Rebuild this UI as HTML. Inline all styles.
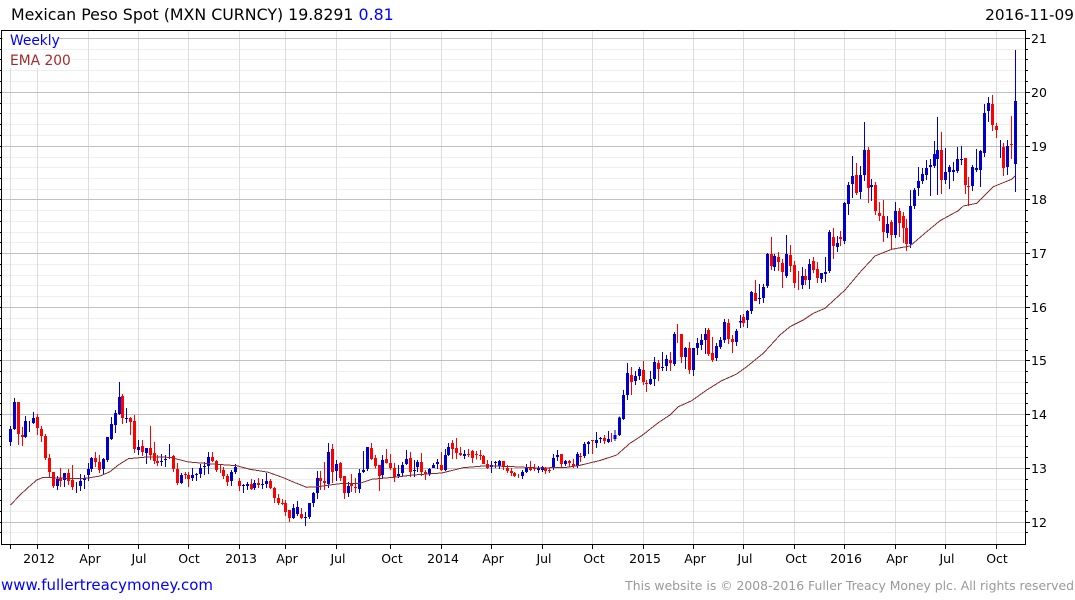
<!DOCTYPE html>
<html><head><meta charset="utf-8"><title>Mexican Peso Spot</title>
<style>
html,body{margin:0;padding:0;background:#fff;width:1075px;height:600px;overflow:hidden}
svg{display:block}
text{font-family:"DejaVu Sans",sans-serif}
.a{font-size:12.5px;fill:#000;text-anchor:middle}
.y{font-size:12.5px;fill:#000}
</style></head><body>
<svg width="1075" height="600" viewBox="0 0 1075 600" xmlns="http://www.w3.org/2000/svg">
<rect width="1075" height="600" fill="#fff"/>
<g shape-rendering="crispEdges" fill="none">
<path stroke="#eeeeee" d="M1 49.5H1025M1 59.5H1025M1 70.5H1025M1 81.5H1025M1 103.5H1025M1 113.5H1025M1 124.5H1025M1 135.5H1025M1 157.5H1025M1 167.5H1025M1 178.5H1025M1 189.5H1025M1 210.5H1025M1 221.5H1025M1 232.5H1025M1 242.5H1025M1 264.5H1025M1 275.5H1025M1 285.5H1025M1 296.5H1025M1 318.5H1025M1 328.5H1025M1 339.5H1025M1 350.5H1025M1 371.5H1025M1 382.5H1025M1 393.5H1025M1 403.5H1025M1 425.5H1025M1 436.5H1025M1 446.5H1025M1 457.5H1025M1 479.5H1025M1 489.5H1025M1 500.5H1025M1 511.5H1025M1 532.5H1025"/>
<path stroke="#dddddd" d="M10.5 68V544M37.5 68V544M88.5 31V544M138.5 31V544M188.5 31V544M239.5 31V544M285.5 31V544M336.5 31V544M390.5 31V544M441.5 31V544M491.5 31V544M542.5 31V544M592.5 31V544M643.5 31V544M693.5 31V544M743.5 31V544M794.5 31V544M844.5 31V544M895.5 31V544M945.5 31V544M996.5 31V544"/>
<path stroke="#c0c0c0" d="M1 38.5H1025M1 92.5H1025M1 146.5H1025M1 199.5H1025M1 253.5H1025M1 307.5H1025M1 360.5H1025M1 414.5H1025M1 468.5H1025M1 522.5H1025"/>
<rect x="3" y="32" width="56" height="15" fill="#fff"/>
<rect x="3" y="52" width="68" height="16" fill="#fff"/>
<path stroke="#000" d="M1.5 30.5H1025.5M1.5 30V544.5M1 544.5H1025.5M1025.5 30V545"/>
<path stroke="#000" d="M10.5 545V549M37.5 545V549M88.5 545V549M138.5 545V549M188.5 545V549M239.5 545V549M285.5 545V549M336.5 545V549M390.5 545V549M441.5 545V549M491.5 545V549M542.5 545V549M592.5 545V549M643.5 545V549M693.5 545V549M743.5 545V549M794.5 545V549M844.5 545V549M895.5 545V549M945.5 545V549M996.5 545V549"/>
<path stroke="#000" d="M1026 38.5H1030M1026 92.5H1030M1026 146.5H1030M1026 199.5H1030M1026 253.5H1030M1026 307.5H1030M1026 360.5H1030M1026 414.5H1030M1026 468.5H1030M1026 522.5H1030M1026 49.5H1028M1026 59.5H1028M1026 70.5H1028M1026 81.5H1028M1026 103.5H1028M1026 113.5H1028M1026 124.5H1028M1026 135.5H1028M1026 157.5H1028M1026 167.5H1028M1026 178.5H1028M1026 189.5H1028M1026 210.5H1028M1026 221.5H1028M1026 232.5H1028M1026 242.5H1028M1026 264.5H1028M1026 275.5H1028M1026 285.5H1028M1026 296.5H1028M1026 318.5H1028M1026 328.5H1028M1026 339.5H1028M1026 350.5H1028M1026 371.5H1028M1026 382.5H1028M1026 393.5H1028M1026 403.5H1028M1026 425.5H1028M1026 436.5H1028M1026 446.5H1028M1026 457.5H1028M1026 479.5H1028M1026 489.5H1028M1026 500.5H1028M1026 511.5H1028M1026 532.5H1028"/>
<path stroke="#000" d="M0 38.5H1M0 49.5H1M0 59.5H1M0 70.5H1M0 81.5H1M0 92.5H1M0 103.5H1M0 113.5H1M0 124.5H1M0 135.5H1M0 146.5H1M0 157.5H1M0 167.5H1M0 178.5H1M0 189.5H1M0 199.5H1M0 210.5H1M0 221.5H1M0 232.5H1M0 242.5H1M0 253.5H1M0 264.5H1M0 275.5H1M0 285.5H1M0 296.5H1M0 307.5H1M0 318.5H1M0 328.5H1M0 339.5H1M0 350.5H1M0 360.5H1M0 371.5H1M0 382.5H1M0 393.5H1M0 403.5H1M0 414.5H1M0 425.5H1M0 436.5H1M0 446.5H1M0 457.5H1M0 468.5H1M0 479.5H1M0 489.5H1M0 500.5H1M0 511.5H1M0 522.5H1M0 532.5H1"/>
</g>
<g shape-rendering="crispEdges" fill="none">
<g transform="translate(0,370) scale(.33333)">
<path stroke="#0000cc" stroke-width="3" d="M31 168V228M43 84V180M76 138V204M88 153V186M100 126V162M172 318V360M193 309V351M229 336V369M241 312V363M253 315V357M265 279V333M274 261V306M310 264V315M322 201V276M334 141V210M346 120V189M358 36V135M379 114V159M415 210V255M439 234V282M484 252V288M496 255V291M508 222V267M544 309V342M577 294V333M589 309V333M601 282V324M613 276V315M625 246V312M694 300V348M706 282V312M730 342V369M742 336V360M763 330V360M787 327V357M799 309V354M880 402V447M892 393V438M916 426V468M928 399V447M940 366V411M952 303V387M985 219V354M1009 270V333M1045 336V381M1078 297V369"/>
<path stroke="#0000cc" stroke-width="9" d="M31 177V216M43 96V177M76 153V201M100 144V159M172 327V348M193 309V330M241 333V348M253 324V330M265 297V315M274 264V297M310 267V297M322 201V270M334 162V207M346 129V165M358 81V132M379 144V147M415 231V240M439 234V249M484 273V276M496 267V270M544 315V339M577 315V324M589 312V315M601 294V312M613 288V291M625 261V288M694 306V333M706 291V306M730 345V348M742 342V348M763 339V354M787 342V345M799 333V342M880 414V444M892 411V432M916 441V444M928 399V441M940 369V399M952 324V369M985 246V342M1009 282V303M1045 348V369M1078 309V357"/>
<path stroke="#ff0000" stroke-width="3" d="M55 96V225M67 171V228M112 132V195M124 168V216M136 192V270M148 252V321M160 306V354M181 294V351M205 297V345M217 285V360M286 246V291M298 255V309M367 72V162M391 141V195M403 135V249M427 210V258M451 168V270M463 216V282M472 255V288M520 255V306M532 279V345M556 306V327M565 306V351M637 246V276M649 270V306M661 285V309M670 291V327M682 312V348M718 324V363M754 327V360M775 324V354M811 327V357M823 351V399M835 372V405M847 387V405M856 390V438M868 420V456M904 414V447M961 303V360M973 276V360M997 222V339M1021 276V333M1033 318V387M1054 312V366M1066 324V369"/>
<path stroke="#ff0000" stroke-width="9" d="M55 96V192M67 195V201M112 141V174M124 177V198M136 198V264M148 264V306M160 306V348M181 324V333M205 309V333M217 330V351M286 264V276M298 276V300M367 78V144M391 144V156M403 153V237M427 228V246M451 234V255M463 249V273M472 273V279M520 258V297M532 297V339M556 312V315M565 315V327M637 261V273M649 273V300M670 300V318M682 318V336M718 333V348M754 342V357M775 339V345M811 333V354M823 354V384M835 384V399M847 399V402M856 399V426M868 420V444M904 432V444M961 324V333M973 333V339M997 237V306M1021 279V324M1033 318V369M1054 342V348M1066 351V354"/>
</g>
<g transform="translate(300,400) scale(.33333)">
<path stroke="#0000cc" stroke-width="3" d="M190 153V219M202 141V213M247 165V234M295 195V234M307 186V231M319 150V195M343 180V231M352 180V216M388 204V228M400 189V204M412 177V207M436 147V213M445 129V168M493 150V177M574 183V219M586 183V204M598 180V207M667 210V237M679 192V219M715 198V219M727 198V216M760 162V210M772 150V183M796 180V198M832 156V204M853 126V174M865 123V162M889 96V144M901 111V129M925 93V129M945 90V123"/>
<path stroke="#0000cc" stroke-width="9" d="M190 210V216M202 141V207M247 180V225M295 222V228M307 195V219M319 177V192M343 210V213M352 186V201M388 207V222M400 195V204M412 186V192M436 165V210M445 141V165M493 162V168M574 195V201M586 186V189M598 183V198M667 216V228M679 201V216M715 204V210M727 201V210M760 174V204M772 165V171M796 183V192M832 162V198M853 132V168M865 126V132M889 120V129M901 114V117M925 117V126M945 105V117"/>
<path stroke="#ff0000" stroke-width="3" d="M214 129V180M226 165V205M238 195V273M259 147V190M271 162V210M283 189V246M331 156V231M364 159V228M376 210V240M424 156V213M457 120V177M469 114V177M481 141V168M505 147V171M517 150V189M529 153V178M541 150V180M550 165V192M562 180V207M610 183V210M622 195V219M634 204V228M643 216V231M655 222V234M691 183V213M703 192V213M736 201V222M748 204V219M784 162V201M808 180V201M820 177V204M841 159V186M877 120V162M913 105V132M934 99V126"/>
<path stroke="#ff0000" stroke-width="9" d="M214 144V177M226 174V198M238 195V228M259 177V189M271 189V204M283 204V231M331 174V216M364 186V216M376 216V222M424 195V210M457 129V147M469 144V159M481 159V165M505 162V165M517 153V174M529 162V165M541 165V168M550 168V192M562 192V204M610 183V201M622 204V213M634 213V219M643 219V228M691 204V210M703 204V207M736 204V213M748 210V213M784 162V192M808 183V189M820 192V198M841 168V171M877 120V123M913 114V123"/>
</g>
<g transform="translate(600,230) scale(.33333)">
<path stroke="#0000cc" stroke-width="3" d="M58 560V618M70 480V570M82 399V510M106 423V465M118 411V450M151 423V465M163 381V468M187 366V423M199 375V423M223 306V408M256 351V417M280 354V438M292 324V375M304 312V360M316 294V372M349 339V393M361 321V357M373 267V339M409 297V348M421 255V294M442 240V294M454 183V252M478 162V222M490 162V219M502 69V174M523 72V123M559 15V144M607 111V177M628 87V177M664 129V159M676 81V156M688 0V129"/>
<path stroke="#0000cc" stroke-width="9" d="M58 563V615M70 495V567M82 429V495M106 438V453M118 417V438M151 447V462M163 396V447M187 411V414M199 387V408M223 312V402M256 354V381M280 354V420M292 339V354M304 330V345M316 312V330M349 348V384M361 330V351M373 276V330M409 303V336M421 273V278M442 243V270M454 186V243M478 204V207M490 171V204M502 72V168M523 78V111M559 72V138M607 138V165M628 102V150M664 129V147M676 126V132M688 6V123"/>
<path stroke="#ff0000" stroke-width="3" d="M94 411V495M130 393V465M139 450V486M175 390V453M211 366V423M232 282V339M244 312V399M268 336V432M325 294V378M337 321V396M385 267V342M397 315V369M430 252V291M466 150V213M514 21V120M535 66V123M547 87V174M571 45V126M583 93V174M595 123V180M616 117V165M640 81V129M652 96V159"/>
<path stroke="#ff0000" stroke-width="9" d="M94 435V456M130 420V456M139 459V462M175 399V417M211 390V399M244 312V381M268 354V420M325 300V372M337 369V390M385 279V327M397 327V336M430 261V279M466 189V213M514 72V108M535 81V96M547 99V126M571 75V108M583 105V159M616 138V150M640 93V120M652 117V144"/>
</g>
<g transform="translate(820,0) scale(.33333)">
<path stroke="#0000cc" stroke-width="3" d="M52 708V756M73 606V732M85 546V645M97 468V594M121 498V597M133 366V543M154 537V603M202 648V714M226 606V714M271 570V744M283 564V627M295 501V588M307 504V552M319 480V540M331 477V588M343 423V504M352 351V585M376 444V552M388 495V567M400 486V543M412 441V519M424 438V495M457 495V573M469 447V516M481 450V561M493 312V471M505 291V366M541 420V474M562 420V525M586 150V576"/>
<path stroke="#0000cc" stroke-width="9" d="M52 729V741M73 609V723M85 555V612M97 528V552M121 525V576M133 450V525M154 555V561M202 672V699M226 633V705M271 618V732M283 570V618M295 543V564M307 522V543M319 504V525M331 495V501M343 462V498M352 450V477M376 516V540M388 501V516M400 510V516M412 477V513M424 477V480M457 501V558M469 504V510M481 453V510M493 339V459M505 309V333M562 438V501M586 303V492"/>
<path stroke="#ff0000" stroke-width="3" d="M40 684V777M61 693V738M109 489V585M145 441V609M166 546V645M178 606V663M190 600V726M214 660V747M238 624V711M250 636V729M259 657V753M364 396V582M436 474V582M445 531V618M517 285V393M529 369V414M550 429V528M574 348V477"/>
<path stroke="#ff0000" stroke-width="9" d="M40 711V738M61 711V717M109 525V579M145 450V564M166 555V633M178 639V648M190 648V696M214 666V705M238 633V669M250 648V684M259 684V732M364 450V540M436 474V555M445 558V561M517 312V375M529 378V390M550 441V504M574 432V435"/>
</g>
</g>
<polyline fill="none" stroke="#8b2a2a" stroke-width="1" shape-rendering="crispEdges" points="10.5,505 20,495 28.3,487.3 36.7,480 43.3,477.3 60,478 76.7,478.7 88.3,478 100,476 110,471.7 118.3,465 128.3,458.7 146.7,457 170,457.3 188.3,462 213.3,464 236.7,465.7 250,469.3 268.3,472.3 283.3,477.7 295,482.7 306.7,487.3 320,486.5 333.3,484.5 343.3,483.3 360,483.3 371.7,479.3 393.3,477.3 413.3,475 441.7,473 463.3,467.7 486.7,465.7 513.3,466.7 540,468 566.7,467.3 580,465.3 600,460.5 616.7,455 630,443.3 641.7,435.7 658.3,422.7 670,415 678.3,406.7 691.7,400.7 706.7,390 721.7,380.7 736.7,374 746.7,366.7 763.3,353.3 780,335 790,326.7 803.3,320 813.3,313.3 825,308.3 845,290 860,272.3 875,256 891.7,249.3 910,246 926.7,231.7 940,220.7 958.3,210.7 963.3,206 976.7,203.3 993.3,186.7 1011.7,179.3 1015.3,175.7"/>
<text x="11" y="20" font-size="15.8" fill="#000">Mexican Peso Spot (MXN CURNCY) 19.8291 <tspan fill="#0000ff">0.81</tspan></text>
<text x="1074" y="20" font-size="15.3" fill="#000" text-anchor="end">2016-11-09</text>
<text x="10" y="45" font-size="13.8" fill="#0000ff">Weekly</text>
<text x="10" y="65" font-size="13.8" fill="#a52a2a">EMA 200</text>
<g class="y">
<text class="y" x="1031" y="43">21</text>
<text class="y" x="1031" y="97">20</text>
<text class="y" x="1031" y="151">19</text>
<text class="y" x="1031" y="204">18</text>
<text class="y" x="1031" y="258">17</text>
<text class="y" x="1031" y="312">16</text>
<text class="y" x="1031" y="365">15</text>
<text class="y" x="1031" y="419">14</text>
<text class="y" x="1031" y="473">13</text>
<text class="y" x="1031" y="527">12</text>
</g>
<text class="a" x="39" y="563">2012</text>
<text class="a" x="90" y="563">Apr</text>
<text class="a" x="139" y="563">Jul</text>
<text class="a" x="189" y="563">Oct</text>
<text class="a" x="241" y="563">2013</text>
<text class="a" x="287" y="563">Apr</text>
<text class="a" x="338" y="563">Jul</text>
<text class="a" x="392" y="563">Oct</text>
<text class="a" x="443" y="563">2014</text>
<text class="a" x="493" y="563">Apr</text>
<text class="a" x="544" y="563">Jul</text>
<text class="a" x="594" y="563">Oct</text>
<text class="a" x="645" y="563">2015</text>
<text class="a" x="695" y="563">Apr</text>
<text class="a" x="745" y="563">Jul</text>
<text class="a" x="796" y="563">Oct</text>
<text class="a" x="846" y="563">2016</text>
<text class="a" x="897" y="563">Apr</text>
<text class="a" x="947" y="563">Jul</text>
<text class="a" x="997" y="563">Oct</text>
<text x="1" y="590" font-size="15" fill="#0000ff">www.fullertreacymoney.com</text>
<text x="1074" y="590" font-size="12.4" fill="#999999" text-anchor="end">This website is © 2008-2016 Fuller Treacy Money plc. All rights reserved</text>
</svg>
</body></html>
